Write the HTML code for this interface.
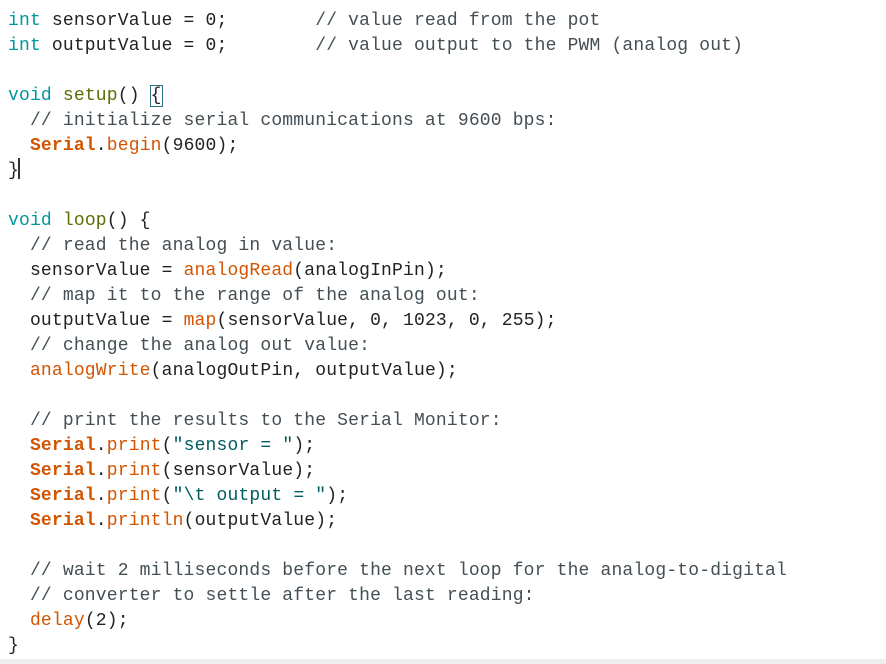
<!DOCTYPE html>
<html><head><meta charset="utf-8"><style>
html,body{margin:0;padding:0;background:#fff;width:886px;height:664px;overflow:hidden;position:relative}
pre{margin:0;position:absolute;left:8px;top:9px;font-family:"Liberation Mono",monospace;font-size:18px;letter-spacing:0.17px;line-height:25px;color:#222}
.k{color:#00979c}.c{color:#434f54}.f{color:#d35400}.s{color:#d35400;font-weight:bold}.q{color:#005c5f}.g{color:#5e6d03}
.box{outline:1px solid #2a6f8a;outline-offset:0}
.bar{position:absolute;left:0;top:659px;width:886px;height:5px;background:#eeeeee}
.cur{position:absolute;left:18px;top:158px;width:2px;height:21px;background:#333}
</style></head><body>
<pre><span class="k">int</span> sensorValue = 0;        <span class="c">// value read from the pot</span>
<span class="k">int</span> outputValue = 0;        <span class="c">// value output to the PWM (analog out)</span>

<span class="k">void</span> <span class="g">setup</span>() <span class="box">{</span>
  <span class="c">// initialize serial communications at 9600 bps:</span>
  <span class="s">Serial</span>.<span class="f">begin</span>(9600);
}

<span class="k">void</span> <span class="g">loop</span>() {
  <span class="c">// read the analog in value:</span>
  sensorValue = <span class="f">analogRead</span>(analogInPin);
  <span class="c">// map it to the range of the analog out:</span>
  outputValue = <span class="f">map</span>(sensorValue, 0, 1023, 0, 255);
  <span class="c">// change the analog out value:</span>
  <span class="f">analogWrite</span>(analogOutPin, outputValue);

  <span class="c">// print the results to the Serial Monitor:</span>
  <span class="s">Serial</span>.<span class="f">print</span>(<span class="q">"sensor = "</span>);
  <span class="s">Serial</span>.<span class="f">print</span>(sensorValue);
  <span class="s">Serial</span>.<span class="f">print</span>(<span class="q">"\t output = "</span>);
  <span class="s">Serial</span>.<span class="f">println</span>(outputValue);

  <span class="c">// wait 2 milliseconds before the next loop for the analog-to-digital</span>
  <span class="c">// converter to settle after the last reading:</span>
  <span class="f">delay</span>(2);
}</pre>
<div class="cur"></div>
<div class="bar"></div>
</body></html>
